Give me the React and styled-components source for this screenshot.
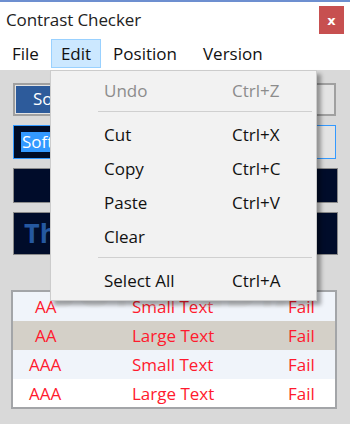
import React from "react";
import styled, { createGlobalStyle } from "styled-components";

const GlobalStyle = createGlobalStyle`
  body {
    margin: 0;
    overflow: hidden;
    font-family: "Open Sans", "Noto Sans", sans-serif;
  }
`;

const Window = styled.div`
  position: relative;
  width: 350px;
  height: 424px;
  background: #d9d9d9;
  overflow: hidden;
`;

const TitleBar = styled.div`
  height: 36px;
  box-sizing: border-box;
  border-top: 2px solid #6d8fd0;
  background: #ffffff;
  display: flex;
  align-items: center;
  justify-content: space-between;
  padding: 0 6px 0 6px;
`;

const Title = styled.div`
  font-size: 17px;
  color: #222;
  letter-spacing: -0.1px;
`;

const CloseButton = styled.div`
  width: 25px;
  height: 28px;
  margin-top: 2px;
  background: #c75050;
  color: #fff;
  font-family: "DejaVu Sans", sans-serif;
  font-weight: bold;
  font-size: 13px;
  display: flex;
  align-items: center;
  justify-content: center;
`;

const MenuBar = styled.div`
  height: 34px;
  background: #ffffff;
  display: flex;
  align-items: center;
  padding: 0 2px;
`;

const MenuTitle = styled.div`
  font-size: 17px;
  color: #111;
  height: 29px;
  display: flex;
  align-items: center;
  padding: 0 9px;
  margin-right: ${({ gap }) => gap || 0}px;
  box-sizing: border-box;
  border: 1px solid ${({ open }) => (open ? "#99d1ff" : "transparent")};
  background: ${({ open }) => (open ? "#cce8ff" : "transparent")};
`;

const Body = styled.div`
  padding: 13px 12px 0 13px;
  display: flex;
  flex-direction: column;
`;

const Field = styled.div`
  height: ${({ h }) => h}px;
  margin-bottom: ${({ mb }) => mb}px;
  margin-right: ${({ mr }) => mr || 0}px;
  box-sizing: border-box;
  border: ${({ border }) => border};
  background: ${({ bg }) => bg};
  display: flex;
  align-items: center;
  overflow: hidden;
`;

const Fill = styled.div`
  align-self: stretch;
  width: 220px;
  background: ${({ bg }) => bg};
  display: flex;
  align-items: center;
  padding-left: ${({ pl }) => pl}px;
  margin: ${({ m }) => m || 0}px;
`;

const FieldText = styled.span`
  font-size: ${({ size }) => size || 17}px;
  font-weight: ${({ weight }) => weight || 400};
  color: ${({ color }) => color};
  background: ${({ hl }) => hl || "transparent"};
  padding: 0 1px;
  line-height: 1.2;
`;

const Table = styled.div`
  margin-top: 35px;
  margin-right: 1px;
  margin-left: -2px;
  border: 2px solid #a3a5a8;
  background: #fff;
`;

const Row = styled.div`
  display: grid;
  grid-template-columns: 68px 180px 1fr;
  height: ${({ h }) => h || 29}px;
  align-items: center;
  background: ${({ bg }) => bg};
  color: #ff1a2e;
  font-size: 17px;
`;

const Cell = styled.div`
  padding-left: ${({ pl }) => pl || 0}px;
`;

const Dropdown = styled.div`
  position: absolute;
  left: 50px;
  top: 70px;
  width: 267px;
  box-sizing: border-box;
  background: #f2f2f2;
  border: 1px solid #cccccc;
  padding: 2px 0 3px 2px;
  box-shadow: 4px 4px 4px rgba(0, 0, 0, 0.35);
`;

const MenuItem = styled.div`
  display: grid;
  grid-template-columns: 128px 1fr;
  height: 34px;
  align-items: center;
  padding-left: 51px;
  font-size: 17px;
  color: ${({ disabled }) => (disabled ? "#8c8c8c" : "#111")};
`;

const Separator = styled.div`
  height: 1px;
  background: #d0d0d0;
  margin: 4px 4px 5px 45px;
`;

const Watermark = styled.div`
  position: absolute;
  left: 50px;
  top: 258px;
  font-family: "Open Sans", sans-serif;
  font-size: 46px;
  font-weight: 700;
  letter-spacing: 1px;
  color: rgba(255, 255, 255, 0.3);
  text-shadow: 0 0 2px rgba(0, 0, 0, 0.06);
  pointer-events: none;
`;

const rows = [
  { level: "AA", size: "Small Text", bg: "#f0f4fa", pl: 22 },
  { level: "AA", size: "Large Text", bg: "#d4d0c8", pl: 22 },
  { level: "AAA", size: "Small Text", bg: "#f0f4fa", pl: 16 },
  { level: "AAA", size: "Large Text", bg: "#ffffff", pl: 16 },
];

const menu = [
  { label: "Undo", key: "Ctrl+Z", disabled: true },
  "sep",
  { label: "Cut", key: "Ctrl+X" },
  { label: "Copy", key: "Ctrl+C" },
  { label: "Paste", key: "Ctrl+V" },
  { label: "Clear", key: "" },
  "sep",
  { label: "Select All", key: "Ctrl+A" },
];

export default function App() {
  return (
    <Window>
      <GlobalStyle />
      <TitleBar>
        <Title>Contrast Checker</Title>
        <CloseButton>x</CloseButton>
      </TitleBar>
      <MenuBar>
        <MenuTitle gap={2}>File</MenuTitle>
        <MenuTitle open gap={2}>Edit</MenuTitle>
        <MenuTitle gap={6}>Position</MenuTitle>
        <MenuTitle>Version</MenuTitle>
      </MenuBar>
      <Body>
        <Field h={33} mb={9} mr={2} border="2px solid #a0a0a0" bg="#e3e3e3">
          <Fill bg="#2d5b9b" pl={16} m={1}>
            <FieldText color="#fff">Software</FieldText>
          </Fill>
        </Field>
        <Field h={34} mb={9} mr={2} border="1px solid #3399ff" bg="#e3e3e3">
          <Fill bg="#000c26" pl={7}>
            <FieldText color="#fff" hl="#3399ff">Softpedia</FieldText>
          </Fill>
        </Field>
        <Field h={35} mb={9} border="1px solid #8a8a8a" bg="#000c2a" />
        <Field h={43} mb={0} border="1px solid #8a8a8a" bg="#000c2a">
          <Fill bg="#000c2a" pl={9}>
            <FieldText color="#2558a0" size={27} weight={700}>The</FieldText>
          </Fill>
        </Field>
        <Table>
          {rows.map((r, i) => (
            <Row key={i} bg={r.bg} h={i === 3 ? 28 : 29}>
              <Cell pl={r.pl}>{r.level}</Cell>
              <Cell pl={51}>{r.size}</Cell>
              <Cell pl={27}>Fail</Cell>
            </Row>
          ))}
        </Table>
      </Body>
      <Watermark>SOFTPEDIA</Watermark>
      <Dropdown>
        {menu.map((m, i) =>
          m === "sep" ? (
            <Separator key={i} />
          ) : (
            <MenuItem key={i} disabled={m.disabled}>
              <span>{m.label}</span>
              <span>{m.key}</span>
            </MenuItem>
          )
        )}
      </Dropdown>
    </Window>
  );
}
